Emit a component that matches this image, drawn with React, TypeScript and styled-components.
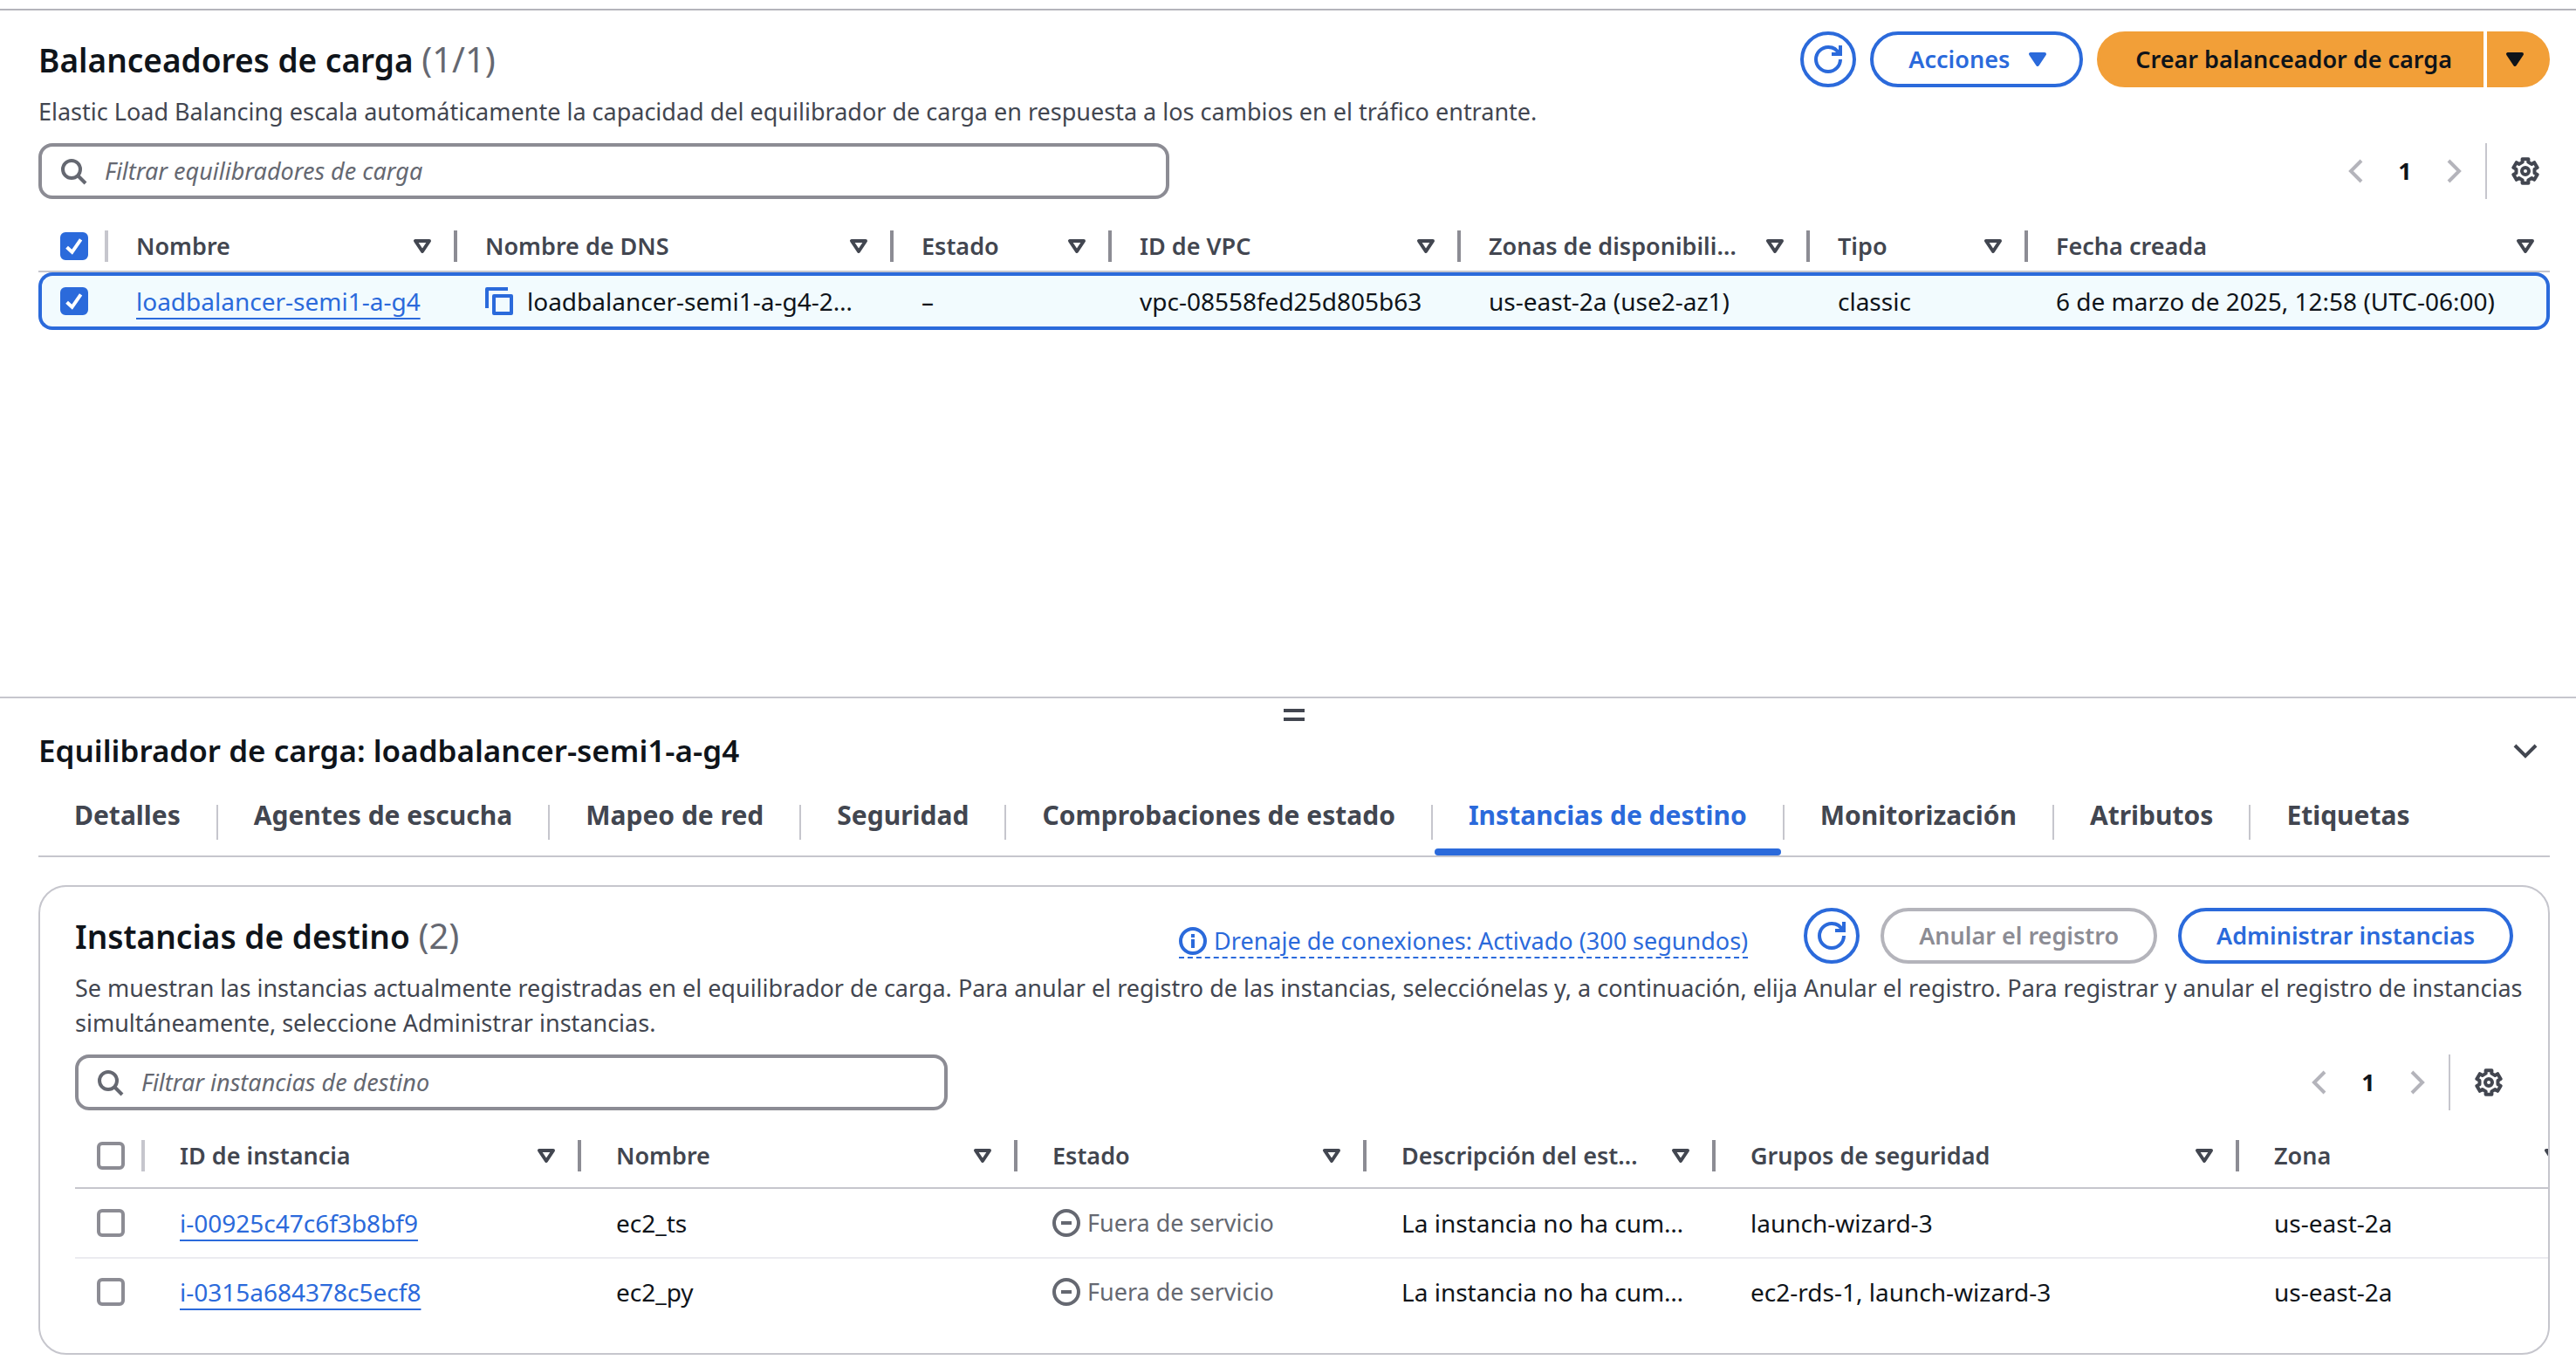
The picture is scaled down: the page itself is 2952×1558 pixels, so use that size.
import React, { useState } from 'react';
import styled, { createGlobalStyle, css } from 'styled-components';

const color = {
  text: '#0f141a',
  secondary: '#424650',
  muted: '#656871',
  control: '#8c8c94',
  disabled: '#b4b4bb',
  divider: '#c6c6cd',
  rowDivider: '#ebebf0',
  blue: '#2b6adb',
  selected: '#f2fbfe',
  orange: '#f29f38',
};

const GlobalStyle = createGlobalStyle`
  *, *::before, *::after { box-sizing: border-box; }
  body {
    margin: 0;
    background: #fff;
    color: ${color.text};
    font-family: "Noto Sans", sans-serif;
    font-size: 27px;
    line-height: 40px;
  }
  button, input { font: inherit; color: inherit; }
  button { cursor: pointer; }
`;

/* ---------- icons ---------- */

const IconSvg = styled.svg`
  display: block;
  flex: none;
  width: 32px;
  height: 32px;
  fill: none;
  stroke: currentColor;
  stroke-width: 2;
`;

type IconProps = { children: React.ReactNode };

const Icon = ({ children }: IconProps) => (
  <IconSvg viewBox="0 0 16 16" aria-hidden="true">
    {children}
  </IconSvg>
);

const RefreshIcon = () => (
  <Icon>
    <path d="M10 5h5V0" />
    <path d="M15 8a7 7 0 0 1-7 7 7 7 0 0 1-7-7 7 7 0 0 1 7-7 6.87 6.87 0 0 1 6.3 4" />
  </Icon>
);

const SearchIcon = () => (
  <Icon>
    <circle cx="7" cy="7" r="5" />
    <path d="m11 11 4 4" />
  </Icon>
);

const CaretIcon = ({ filled }: { filled?: boolean }) => (
  <Icon>
    <path d="M4 5h8l-4 6-4-6z" strokeLinejoin="round" fill={filled ? 'currentColor' : 'none'} />
  </Icon>
);

const AngleLeftIcon = () => (
  <Icon>
    <path d="M11 2 5 8l6 6" />
  </Icon>
);

const AngleRightIcon = () => (
  <Icon>
    <path d="m5 2 6 6-6 6" />
  </Icon>
);

const AngleDownIcon = () => (
  <Icon>
    <path d="m2 5 6 6 6-6" />
  </Icon>
);

const CopyIcon = () => (
  <Icon>
    <path d="M5 5h10v10H5z" strokeLinejoin="round" />
    <path d="M13 1H1v11" strokeLinejoin="round" />
  </Icon>
);

const InfoIcon = () => (
  <Icon>
    <circle cx="8" cy="8" r="7" />
    <path d="M8 4v2M8 7v5" />
  </Icon>
);

const StoppedIcon = () => (
  <Icon>
    <circle cx="8" cy="8" r="7" />
    <path d="M5 8h6" />
  </Icon>
);

const polar = (radius: number, degrees: number) => {
  const a = (degrees * Math.PI) / 180;
  return `${(8 + radius * Math.sin(a)).toFixed(2)} ${(8 - radius * Math.cos(a)).toFixed(2)}`;
};

const gearPath =
  'M' +
  [0, 60, 120, 180, 240, 300]
    .map(
      a =>
        `${polar(5.4, a - 18)} L${polar(7.1, a - 14)} L${polar(7.1, a + 14)} L${polar(5.4, a + 18)} Q${polar(5.2, a + 30)} `
    )
    .join('') +
  `${polar(5.4, -18)}Z`;

const GearIcon = () => (
  <Icon>
    <path d={gearPath} strokeLinejoin="round" />
    <circle cx="8" cy="8" r="2" />
  </Icon>
);

/* ---------- controls ---------- */

const buttonTones = {
  normal: css`
    border-color: ${color.blue};
    background: #fff;
    color: ${color.blue};
  `,
  disabled: css`
    border-color: ${color.disabled};
    background: #fff;
    color: ${color.control};
    cursor: default;
  `,
  primary: css`
    border-color: ${color.orange};
    background: ${color.orange};
    color: ${color.text};
  `,
};

const Button = styled.button<{ $tone: keyof typeof buttonTones; $caret?: boolean }>`
  display: flex;
  align-items: center;
  gap: 16px;
  height: 64px;
  padding: 0 ${p => (p.$caret ? '32px' : '40px')} 0 40px;
  border: 4px solid;
  border-radius: 32px;
  font-weight: 600;
  white-space: nowrap;
  ${p => buttonTones[p.$tone]}
`;

const RoundButton = styled(Button)`
  justify-content: center;
  width: 64px;
  padding: 0;
`;

const SplitButton = styled.div`
  display: flex;
  gap: 4px;
`;

const SplitMain = styled(Button)`
  padding: 0 32px 0 40px;
  border-radius: 32px 0 0 32px;
`;

const SplitMore = styled(Button)`
  padding: 0 20px 0 12px;
  border-radius: 0 32px 32px 0;
`;

const IconButton = styled.button<{ $color?: string }>`
  display: grid;
  place-items: center;
  padding: 0;
  border: 0;
  background: none;
  color: ${p => p.$color || color.secondary};
`;

const CheckWrap = styled.span`
  display: grid;
  width: 32px;
  height: 32px;
  > * {
    grid-area: 1 / 1;
  }
  > svg {
    color: #fff;
    pointer-events: none;
  }
`;

const CheckInput = styled.input`
  appearance: none;
  width: 32px;
  height: 32px;
  margin: 0;
  border: 4px solid ${color.control};
  border-radius: 6px;
  background: #fff;
  &:checked {
    border-color: ${color.blue};
    background: ${color.blue};
  }
`;

const Checkbox = ({ label, initial }: { label: string; initial?: boolean }) => {
  const [checked, setChecked] = useState(!!initial);
  return (
    <CheckWrap>
      <CheckInput
        type="checkbox"
        aria-label={label}
        checked={checked}
        onChange={e => setChecked(e.target.checked)}
      />
      {checked && (
        <Icon>
          <path d="m3.8 8.6 3 2.8 5-7.2" />
        </Icon>
      )}
    </CheckWrap>
  );
};

const SearchBox = styled.label<{ $width: string }>`
  display: flex;
  align-items: center;
  gap: 20px;
  flex: 0 1 ${p => p.$width};
  height: 64px;
  padding: 0 20px;
  border: 4px solid ${color.control};
  border-radius: 16px;
  color: ${color.muted};
`;

const SearchInput = styled.input`
  flex: 1;
  min-width: 0;
  padding: 0;
  border: 0;
  outline: 0;
  background: none;
  color: ${color.text};
  &::placeholder {
    color: ${color.muted};
    font-style: italic;
    opacity: 1;
  }
`;

const Filter = ({ placeholder, width }: { placeholder: string; width: string }) => (
  <SearchBox $width={width}>
    <SearchIcon />
    <SearchInput type="text" placeholder={placeholder} aria-label={placeholder} />
  </SearchBox>
);

const PagerBar = styled.div`
  display: flex;
  align-items: center;
  height: 64px;
  padding-right: 12px;
`;

const PageNumber = styled.button`
  width: 80px;
  padding: 0;
  border: 0;
  background: none;
  font-weight: 700;
  text-align: center;
`;

const PagerDivider = styled.span`
  width: 2px;
  height: 64px;
  margin: 0 28px 0 20px;
  background: ${color.divider};
`;

const Pager = () => (
  <PagerBar>
    <IconButton $color={color.disabled} aria-label="Página anterior">
      <AngleLeftIcon />
    </IconButton>
    <PageNumber>1</PageNumber>
    <IconButton $color={color.disabled} aria-label="Página siguiente">
      <AngleRightIcon />
    </IconButton>
    <PagerDivider />
    <IconButton aria-label="Preferencias">
      <GearIcon />
    </IconButton>
  </PagerBar>
);

/* ---------- page structure ---------- */

const Page = styled.div`
  display: flex;
  flex-direction: column;
  min-height: 100vh;
  padding-top: 10px;
`;

const TopPanel = styled.main`
  flex: 1;
  padding: 24px 30px 40px 44px;
  border-top: 2px solid ${color.disabled};
`;

const BottomPanel = styled.section`
  padding: 0 30px 6px 44px;
  border-top: 2px solid ${color.divider};
`;

const HeaderRow = styled.div`
  display: flex;
  align-items: center;
  justify-content: space-between;
`;

const Actions = styled.div<{ $gap: string }>`
  display: flex;
  align-items: center;
  gap: ${p => p.$gap};
`;

const Title = styled.h2`
  margin: 0;
  font-size: 37px;
  line-height: 48px;
  font-weight: 600;
`;

const Count = styled.span`
  color: ${color.muted};
  font-size: 40px;
  font-weight: 400;
`;

const Description = styled.p`
  margin: 8px -20px 16px 0;
  color: ${color.secondary};
`;

const Toolbar = styled.div<{ $space: string }>`
  display: flex;
  align-items: center;
  justify-content: space-between;
  margin-bottom: ${p => p.$space};
`;

/* ---------- tables ---------- */

const Table = styled.table<{ $width: string; $inset: string }>`
  width: ${p => p.$width};
  table-layout: fixed;
  border-collapse: separate;
  border-spacing: 0;
  font-size: 28px;
  th,
  td {
    padding: 0 0 0 ${p => p.$inset};
    text-align: left;
    white-space: nowrap;
  }
  th:first-child,
  td:first-child {
    padding-left: 25px;
  }
`;

const Col = styled.col<{ $width?: string }>`
  width: ${p => p.$width || 'auto'};
`;

const HeadCell = styled.th<{ $height: string }>`
  height: ${p => p.$height};
  border-bottom: 2px solid ${color.divider};
  color: ${color.secondary};
  font-size: 27px;
  font-weight: 600;
`;

const HeadContent = styled.div<{ $last?: boolean }>`
  display: flex;
  align-items: center;
  justify-content: space-between;
  height: 36px;
  padding-right: ${p => (p.$last ? '12px' : '0')};
`;

const HeadTools = styled.span`
  display: flex;
  align-items: center;
  gap: 20px;
`;

const Resizer = styled.span<{ $light?: boolean }>`
  width: 4px;
  height: 36px;
  background: ${p => (p.$light ? color.divider : color.control)};
`;

type HeadProps = { label: string; height: string; last?: boolean };

const Head = ({ label, height, last }: HeadProps) => (
  <HeadCell $height={height} scope="col">
    <HeadContent $last={last}>
      {label}
      <HeadTools>
        <IconButton aria-label={`Ordenar por ${label}`}>
          <CaretIcon />
        </IconButton>
        {!last && <Resizer />}
      </HeadTools>
    </HeadContent>
  </HeadCell>
);

const HeadCheck = ({ height, checked }: { height: string; checked?: boolean }) => (
  <HeadCell $height={height} scope="col">
    <HeadContent>
      <Checkbox label="Seleccionar todo" initial={checked} />
      <Resizer $light />
    </HeadContent>
  </HeadCell>
);

const SelectedRow = styled.tr`
  td {
    height: 66px;
    border: solid ${color.blue};
    border-width: 4px 0;
    background: ${color.selected};
  }
  td:first-child {
    padding-left: 21px;
    border-left-width: 4px;
    border-radius: 16px 0 0 16px;
  }
  td:last-child {
    border-right-width: 4px;
    border-radius: 0 16px 16px 0;
  }
`;

const InstanceRow = styled.tr`
  td {
    height: 76px;
  }
  &:not(:last-child) td {
    height: 80px;
    border-bottom: 2px solid ${color.rowDivider};
  }
`;

const TextLink = styled.a`
  color: ${color.blue};
  text-decoration: underline;
  text-decoration-thickness: 2px;
  text-decoration-skip-ink: none;
  text-underline-offset: 8px;
`;

const CopyCell = styled.span`
  display: flex;
  align-items: center;
  gap: 16px;
`;

const Status = styled.span`
  display: flex;
  align-items: center;
  gap: 8px;
  color: ${color.muted};
  font-size: 27px;
`;

/* ---------- details panel ---------- */

const Handle = styled.div`
  display: flex;
  flex-direction: column;
  align-items: center;
  gap: 6px;
  height: 38px;
  padding-top: 12px;
`;

const HandleBar = styled.span`
  width: 24px;
  height: 4px;
  background: ${color.secondary};
`;

const PanelHeader = styled.div`
  display: flex;
  align-items: center;
  justify-content: space-between;
  height: 44px;
  padding-right: 12px;
`;

const PanelTitle = styled.h3`
  margin: 0;
  font-size: 35px;
  line-height: 44px;
  font-weight: 600;
`;

const TabList = styled.div`
  display: flex;
  margin: 32px 0;
  border-bottom: 2px solid ${color.divider};
`;

const Tab = styled.button<{ $active: boolean }>`
  display: flex;
  flex-direction: column;
  padding: 0;
  border: 0;
  background: none;
  color: ${p => (p.$active ? color.blue : color.secondary)};
  font-size: 30px;
  font-weight: 700;
`;

const TabLabel = styled.span`
  padding: 0 41px 18px;
  line-height: 40px;
`;

const TabUnderline = styled.span<{ $active: boolean }>`
  align-self: stretch;
  height: 8px;
  margin: 0 2px;
  border-radius: 4px;
  background: ${p => (p.$active ? color.blue : 'transparent')};
`;

const TabDivider = styled.span`
  width: 2px;
  height: 40px;
  margin-top: 8px;
  background: ${color.divider};
`;

const Card = styled.section`
  padding: 24px 0 32px 40px;
  border: 2px solid ${color.divider};
  border-radius: 32px;
`;

const CardHead = styled.div`
  padding-right: 40px;
`;

const CardTable = styled.div`
  overflow: hidden;
`;

const DrainLink = styled.a`
  display: flex;
  align-items: center;
  gap: 8px;
  margin: 14px 40px 0 0;
  border-bottom: 2px dashed ${color.blue};
  color: ${color.blue};
  line-height: 36px;
  text-decoration: none;
`;

const tabs = [
  'Detalles',
  'Agentes de escucha',
  'Mapeo de red',
  'Seguridad',
  'Comprobaciones de estado',
  'Instancias de destino',
  'Monitorización',
  'Atributos',
  'Etiquetas',
];

const balancerColumns = [
  { label: 'Nombre', width: '400px' },
  { label: 'Nombre de DNS', width: '500px' },
  { label: 'Estado', width: '250px' },
  { label: 'ID de VPC', width: '400px' },
  { label: 'Zonas de disponibili…', width: '400px' },
  { label: 'Tipo', width: '250px' },
  { label: 'Fecha creada' },
];

const instanceColumns = [
  { label: 'ID de instancia', width: '500px' },
  { label: 'Nombre', width: '500px' },
  { label: 'Estado', width: '400px' },
  { label: 'Descripción del est…', width: '400px' },
  { label: 'Grupos de seguridad', width: '600px' },
  { label: 'Zona', width: '400px' },
];

const instances = [
  { id: 'i-00925c47c6f3b8bf9', name: 'ec2_ts', groups: 'launch-wizard-3' },
  { id: 'i-0315a684378c5ecf8', name: 'ec2_py', groups: 'ec2-rds-1, launch-wizard-3' },
];

const BalancerTable = () => (
  <Table $width="100%" $inset="32px">
    <colgroup>
      <Col $width="80px" />
      {balancerColumns.map(c => (
        <Col key={c.label} $width={c.width} />
      ))}
    </colgroup>
    <thead>
      <tr>
        <HeadCheck height="58px" checked />
        {balancerColumns.map((c, i) => (
          <Head key={c.label} label={c.label} height="58px" last={i === balancerColumns.length - 1} />
        ))}
      </tr>
    </thead>
    <tbody>
      <SelectedRow>
        <td>
          <Checkbox label="Seleccionar loadbalancer-semi1-a-g4" initial />
        </td>
        <td>
          <TextLink href="#balanceador">loadbalancer-semi1-a-g4</TextLink>
        </td>
        <td>
          <CopyCell>
            <IconButton $color={color.blue} aria-label="Copiar nombre de DNS">
              <CopyIcon />
            </IconButton>
            loadbalancer-semi1-a-g4-2…
          </CopyCell>
        </td>
        <td>–</td>
        <td>vpc-08558fed25d805b63</td>
        <td>us-east-2a (use2-az1)</td>
        <td>classic</td>
        <td>6 de marzo de 2025, 12:58 (UTC-06:00)</td>
      </SelectedRow>
    </tbody>
  </Table>
);

const InstanceTable = () => (
  <Table $width="2880px" $inset="40px">
    <colgroup>
      <Col $width="80px" />
      {instanceColumns.map(c => (
        <Col key={c.label} $width={c.width} />
      ))}
    </colgroup>
    <thead>
      <tr>
        <HeadCheck height="74px" />
        {instanceColumns.map(c => (
          <Head key={c.label} label={c.label} height="74px" />
        ))}
      </tr>
    </thead>
    <tbody>
      {instances.map(row => (
        <InstanceRow key={row.id}>
          <td>
            <Checkbox label={`Seleccionar ${row.id}`} />
          </td>
          <td>
            <TextLink href={`#${row.id}`}>{row.id}</TextLink>
          </td>
          <td>{row.name}</td>
          <td>
            <Status>
              <StoppedIcon />
              Fuera de servicio
            </Status>
          </td>
          <td>La instancia no ha cum…</td>
          <td>{row.groups}</td>
          <td>us-east-2a</td>
        </InstanceRow>
      ))}
    </tbody>
  </Table>
);

export default function App() {
  const [active, setActive] = useState('Instancias de destino');

  return (
    <>
      <GlobalStyle />
      <Page>
        <TopPanel>
          <HeaderRow>
            <Title>
              Balanceadores de carga <Count>(1/1)</Count>
            </Title>
            <Actions $gap="16px">
              <RoundButton $tone="normal" aria-label="Actualizar balanceadores">
                <RefreshIcon />
              </RoundButton>
              <Button $tone="normal" $caret>
                Acciones
                <CaretIcon filled />
              </Button>
              <SplitButton>
                <SplitMain $tone="primary">Crear balanceador de carga</SplitMain>
                <SplitMore $tone="primary" aria-label="Más opciones de creación">
                  <CaretIcon filled />
                </SplitMore>
              </SplitButton>
            </Actions>
          </HeaderRow>
          <Description>
            Elastic Load Balancing escala automáticamente la capacidad del equilibrador de carga en respuesta a los
            cambios en el tráfico entrante.
          </Description>
          <Toolbar $space="26px">
            <Filter placeholder="Filtrar equilibradores de carga" width="1296px" />
            <Pager />
          </Toolbar>
          <BalancerTable />
        </TopPanel>

        <BottomPanel>
          <Handle>
            <HandleBar />
            <HandleBar />
          </Handle>
          <PanelHeader>
            <PanelTitle>Equilibrador de carga: loadbalancer-semi1-a-g4</PanelTitle>
            <IconButton aria-label="Contraer panel">
              <AngleDownIcon />
            </IconButton>
          </PanelHeader>

          <TabList role="tablist">
            {tabs.map((tab, i) => (
              <React.Fragment key={tab}>
                {i > 0 && <TabDivider />}
                <Tab role="tab" aria-selected={tab === active} $active={tab === active} onClick={() => setActive(tab)}>
                  <TabLabel>{tab}</TabLabel>
                  <TabUnderline $active={tab === active} />
                </Tab>
              </React.Fragment>
            ))}
          </TabList>

          <Card>
            <CardHead>
              <HeaderRow>
                <Title>
                  Instancias de destino <Count>(2)</Count>
                </Title>
                <Actions $gap="24px">
                  <DrainLink href="#drenaje">
                    <InfoIcon />
                    Drenaje de conexiones: Activado (300 segundos)
                  </DrainLink>
                  <RoundButton $tone="normal" aria-label="Actualizar instancias">
                    <RefreshIcon />
                  </RoundButton>
                  <Button $tone="disabled" disabled>
                    Anular el registro
                  </Button>
                  <Button $tone="normal">Administrar instancias</Button>
                </Actions>
              </HeaderRow>
              <Description>
                Se muestran las instancias actualmente registradas en el equilibrador de carga. Para anular el registro
                de las instancias, selecciónelas y, a continuación, elija Anular el registro. Para registrar y anular el
                registro de instancias simultáneamente, seleccione Administrar instancias.
              </Description>
              <Toolbar $space="16px">
                <Filter placeholder="Filtrar instancias de destino" width="1000px" />
                <Pager />
              </Toolbar>
            </CardHead>
            <CardTable>
              <InstanceTable />
            </CardTable>
          </Card>
        </BottomPanel>
      </Page>
    </>
  );
}
